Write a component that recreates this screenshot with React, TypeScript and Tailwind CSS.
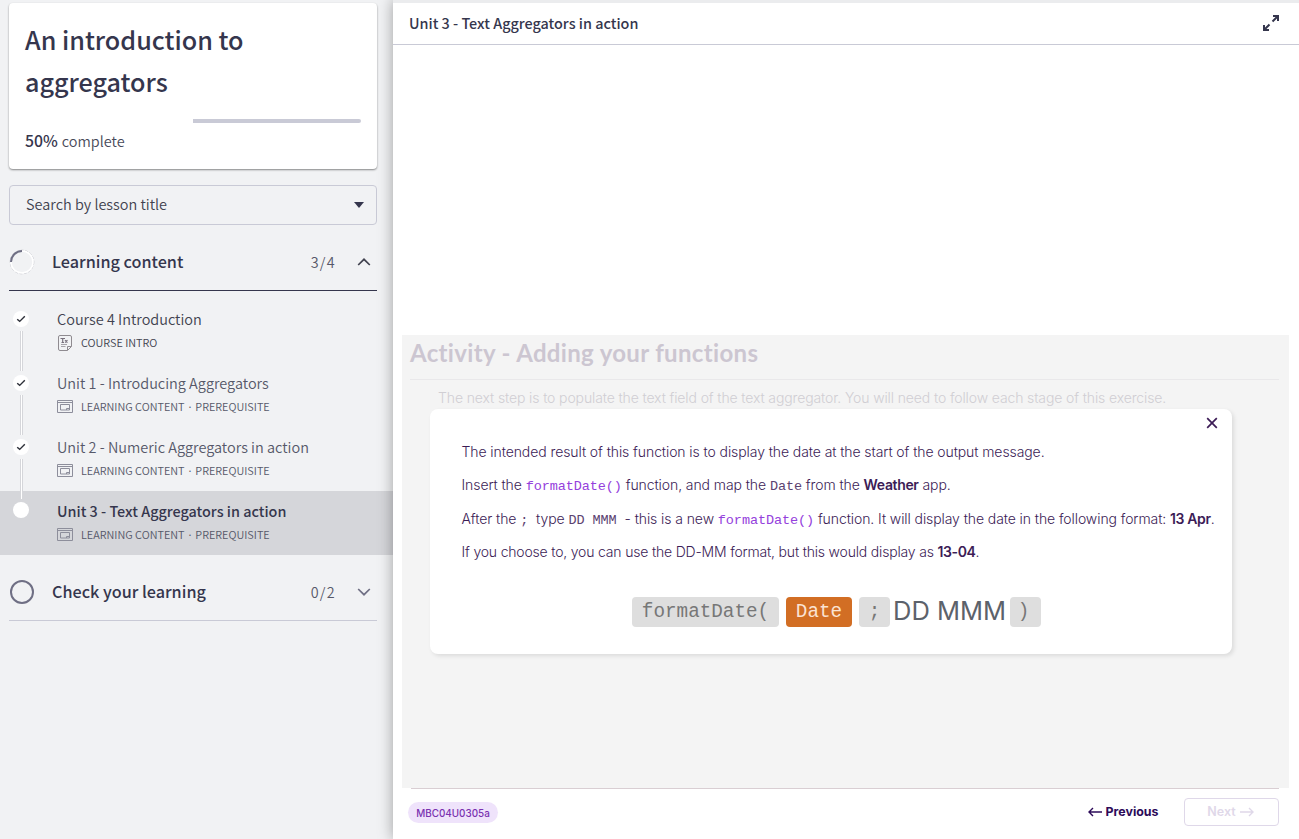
import React from "react";

const sans = "font-['Noto_Sans_CJK_JP','Noto_Sans',sans-serif]";
const inter = "font-[Inter,sans-serif]";

function Check() {
  return (
    <svg width="10" height="8" viewBox="0 0 10 8" fill="none" stroke="#2d3039" strokeWidth="1.4">
      <path d="M1.200 4.200 3.700 6.400 8.800 1.200" />
    </svg>
  );
}

function DocIcon() {
  return (
    <svg width="14" height="16" viewBox="0 0 14 16" fill="none" stroke="#8f8b90" strokeWidth="1">
      <path d="M2 .5h10a1.500 1.500 0 0 1 1.500 1.500v9.500l-4 4H2A1.500 1.500 0 0 1 .5 14V2A1.500 1.500 0 0 1 2 .5Z" />
      <path d="M9.500 15.300V11.500H13.300" />
      <path d="M2.500 3.500h4.500M4.700 3.500v4M3.500 7.500h2.500M7 5.300l2.500 2.200M9.500 5.300 7 7.500" stroke="#77707c" strokeWidth="1.200" />
      <path d="M3 9.500h6M3 11.500h4.500" stroke="#a5a2a8" />
    </svg>
  );
}

function WindowIcon() {
  return (
    <svg width="16" height="13" viewBox="0 0 16 13" fill="none" stroke="#8d8e9b" strokeWidth="1" className="-mt-px">
      <path d="M.5.5h15v12H.5ZM.5 2.500h15M3.500 4.500h9v5.500h-9Z" />
      <path d="M9.500 10V8.500H12.500" />
    </svg>
  );
}

function Chevron({ up = false, color }: { up?: boolean; color: string }) {
  return (
    <svg width="14" height="8" viewBox="0 0 14 8" fill="none" stroke={color} strokeWidth="1.7">
      <path d={up ? "M1.200 7 7 1.300 12.800 7" : "M1.200 1 7 6.700 12.800 1"} />
    </svg>
  );
}

type Lesson = { title: string; intro?: boolean; active?: boolean };

const lessons: Lesson[] = [
  { title: "Course 4 Introduction", intro: true },
  { title: "Unit 1 - Introducing Aggregators" },
  { title: "Unit 2 - Numeric Aggregators in action" },
  { title: "Unit 3 - Text Aggregators in action", active: true },
];

function LessonRow({ title, intro, active }: Lesson) {
  return (
    <li className={"relative flex h-16 " + (active ? "bg-[#d5d6da]" : "")}>
      <div className={"ml-[13px] flex size-4 shrink-0 items-center justify-center rounded-full bg-white " + (active ? "mt-[11px]" : "mt-3")}>
        {!active && <Check />}
      </div>
      {!active && (
        <div className="absolute left-5 top-8 z-10 h-10 w-[3px] border-x border-[#d5d6da] bg-white" />
      )}
      <div className="ml-7 flex flex-col pt-2">
        <div
          className={
            "h-[25px] whitespace-nowrap leading-[23px] " +
            (active
              ? "text-[14.4px] font-medium text-[#35364d]"
              : "text-[14.47px] font-[350] " + (intro ? "text-[#41424f]" : "text-[#565869]"))
          }
        >
          {title}
        </div>
        <div className="flex h-[22px] items-center">
          <div className="flex w-6 shrink-0 items-center">
            {intro ? <span className="pl-px"><DocIcon /></span> : <WindowIcon />}
          </div>
          <span className={"whitespace-nowrap pb-0.5 text-[10.87px] font-[350] leading-5 " + (intro ? "text-[#41424f]" : "text-[#565869]")}>
            {intro ? "COURSE INTRO" : "LEARNING CONTENT · PREREQUISITE"}
          </span>
        </div>
      </div>
    </li>
  );
}

function Sidebar() {
  return (
    <aside className={"flex w-[393px] shrink-0 flex-col bg-[#f1f2f4] pt-[3px] text-[#35364d] " + sans}>
      <div className="ml-[9px] h-[166px] w-[368px] rounded bg-white px-4 pt-[15px] shadow-[0_1px_2px_rgba(0,0,0,0.45)]">
        <h1 className="h-[84px] w-[260px] text-[25.15px] font-medium leading-[42px]">
          An introduction to aggregators
        </h1>
        <div className="mt-[17px] flex h-1 justify-end">
          <div className="w-[168px] rounded-r-sm bg-[#c9cad6]" />
        </div>
        <div className="mt-1.5 flex h-6 items-center whitespace-nowrap text-[14.47px]">
          <span className="text-[15.8px] font-medium">50%</span>
          <span className="ml-1 font-[350] text-[#484a59]">complete</span>
        </div>
      </div>
      <div className="ml-[9px] mt-4 flex h-10 w-[368px] items-center justify-between rounded border border-[#c9cad6] pl-4 pr-3 text-[14.47px] text-[#41424f]">
        <span className="whitespace-nowrap pb-0.5 font-[350]">Search by lesson title</span>
        <svg width="10" height="6" viewBox="0 0 10 6" fill="#35364d"><path d="M0 0h10L5 6Z" /></svg>
      </div>
      <div className="ml-[9px] flex h-[66px] w-[368px] items-center border-b border-[#35364d] pt-[8px]">
        <svg width="26" height="26" viewBox="0 0 26 26" fill="none">
          <circle cx="13" cy="13" r="11.800" stroke="#c8c9cf" strokeWidth="1" strokeDasharray="3 1.500" />
          <circle cx="13" cy="13" r="11" stroke="#fff" strokeWidth="1.600" />
          <path d="M2 13A11 11 0 0 1 13 2" stroke="#6f6f84" strokeWidth="2" />
        </svg>
        <span className="ml-[17px] whitespace-nowrap pb-px text-[16.2px] font-medium">Learning content</span>
        <span className="ml-auto mr-[21px] pt-px text-[14.4px] font-[350] tracking-[1.3px] text-[#565869]">3/4</span>
        <span className="mr-[6px]"><Chevron up color="#41424f" /></span>
      </div>
      <ul className="mt-2">
        {lessons.map((l) => <LessonRow key={l.title} {...l} />)}
      </ul>
      <div className="ml-[9px] flex h-[66px] w-[368px] items-center border-b border-[#c9cad6] pt-[8px]">
        <svg width="26" height="26" viewBox="0 0 26 26" fill="none">
          <circle cx="13" cy="13" r="11" stroke="#6f6f84" strokeWidth="2" />
        </svg>
        <span className="ml-[17px] whitespace-nowrap pb-px text-[16.2px] font-medium">Check your learning</span>
        <span className="ml-auto mr-[21px] pt-px text-[14.4px] font-[350] tracking-[1.3px] text-[#565869]">0/2</span>
        <span className="mr-[6px]"><Chevron color="#6f6f84" /></span>
      </div>
    </aside>
  );
}

function Code({ children, purple = false }: { children: React.ReactNode; purple?: boolean }) {
  return (
    <code className={"whitespace-pre font-['Liberation_Mono',monospace] text-[13.500px] " + (purple ? "text-[#9440dc]" : "text-[#5b4270]")}>
      {children}
    </code>
  );
}

const chip = "flex h-[30px] items-center justify-center rounded bg-[#dedede] text-[#777]";

function Dialog() {
  return (
    <section className="ml-7 h-[245px] w-[802px] rounded-lg bg-white shadow-[2px_2px_4px_rgba(0,0,0,0.1)]">
      <div className="flex h-7 items-center justify-end pr-[14px]">
        <svg width="12" height="12" viewBox="0 0 12 12" stroke="#3c1c56" strokeWidth="1.700">
          <path d="m1.200 1.200 9.600 9.600M10.800 1.200 1.200 10.800" />
        </svg>
      </div>
      <div className="flex flex-col pl-[31.500px] pt-[5px] text-[14px] font-light tracking-[-0.085px] text-[#3c1c56] [&>p]:h-[33.300px] [&>p]:whitespace-nowrap [&>p]:leading-5 [&_b]:font-semibold [&_b]:tracking-[-0.350px]">
        <p>The intended result of this function is to display the date at the start of the output message.</p>
        <p>Insert the <Code purple>formatDate()</Code> function, and map the <Code>Date</Code> from the <b>Weather</b> app.</p>
        <p>After the <Code>;</Code> <span className="ml-1">type</span> <Code>DD MMM </Code>- this is a new <Code purple>formatDate()</Code> function. It will display the date in the following format: <b>13 Apr</b>.</p>
        <p className="tracking-[-0.185px]">If you choose to, you can use the DD-MM format, but this would display as <b>13-04</b>.</p>
      </div>
      <div className="ml-[202px] mt-[22px] flex h-[30px] items-center font-['Liberation_Mono',monospace] text-[19.300px]">
        <span className={chip + " w-[147px]"}>formatDate(</span>
        <span className="ml-[7px] flex h-[30px] w-[66px] items-center justify-center rounded bg-[#d26e24] text-[#fbe3d3]">Date</span>
        <span className={chip + " ml-[7px] w-[31px]"}>;</span>
        <span className="ml-[3px] w-[117px] whitespace-nowrap pb-[3px] font-[Inter,sans-serif] text-[25.500px] font-normal text-[#5c626b]">DD MMM</span>
        <span className={chip + " w-[31px] pr-1"}>)</span>
      </div>
    </section>
  );
}

export default function App() {
  return (
    <div className="flex h-[839px] w-[1299px] overflow-hidden bg-[#f1f2f4]">
      <Sidebar />
      <main className={"relative z-20 flex w-[906px] flex-col border-t-[3px] border-[#ebecee] bg-white shadow-[0_0_14px_rgba(0,0,0,0.35)] " + inter}>
        <header className={"flex h-[42px] shrink-0 items-center justify-between border-b border-[#c9cad6] pl-4 pr-5 " + sans}>
          <span className="whitespace-nowrap pb-0.5 text-[14.4px] font-medium text-[#35364d]">Unit 3 - Text Aggregators in action</span>
          <svg width="16" height="16" viewBox="0 0 16 16" fill="none" stroke="#35364d" strokeWidth="2" className="-mt-px">
            <path d="M9.500 6.500 15 1M10 1h5v5M6.500 9.500 1 15M1 10v5h5" />
          </svg>
        </header>
        <div className="ml-[9px] mt-[290px] h-[453px] w-[887px] shrink-0 bg-[#f4f4f4]">
          <div className="ml-2 mr-[10px] h-[45px] border-b border-[#e9e8ea]">
            <h2 className="whitespace-nowrap font-[Lato,sans-serif] text-2xl font-bold leading-9 tracking-[0.330px] text-[#ccc6d1]">Activity - Adding your functions</h2>
          </div>
          <p className="h-[29px] whitespace-nowrap pl-9 pt-2 text-[14px] font-light leading-5 tracking-[-0.120px] text-[#d0ced3]">
            The next step is to populate the text field of the text aggregator. You will need to follow each stage of this exercise.
          </p>
          <Dialog />
        </div>
        <footer className="ml-[15px] mr-5 flex h-12 shrink-0 items-center">
          <span className="flex h-[21px] w-[90px] items-center justify-center rounded-full bg-[#efe3fb] pt-0.5 text-[9.900px] font-medium text-[#7a32b0]">MBC04U0305a</span>
          <span className="ml-auto mr-[25.500px] flex items-center gap-1 text-[12.400px] font-bold text-[#2d0b59]">
            <svg width="14" height="10" viewBox="0 0 14 10" fill="none" stroke="currentColor" strokeWidth="1.400"><path d="M14 5H1M5 1 1 5l4 4" /></svg>
            Previous
          </span>
          <span className="flex h-7 w-[95px] items-center justify-center gap-1 rounded border border-[#dfd8e9] pr-0.5 text-[12.500px] font-semibold text-[#dfd8e9]">
            Next
            <svg width="14" height="10" viewBox="0 0 14 10" fill="none" stroke="currentColor" strokeWidth="1.400"><path d="M0 5h13M9 1l4 4-4 4" /></svg>
          </span>
        </footer>
        <div className="absolute left-[18px] top-[785px] h-px w-[868px] bg-[#d9ced3]" />
      </main>
    </div>
  );
}
